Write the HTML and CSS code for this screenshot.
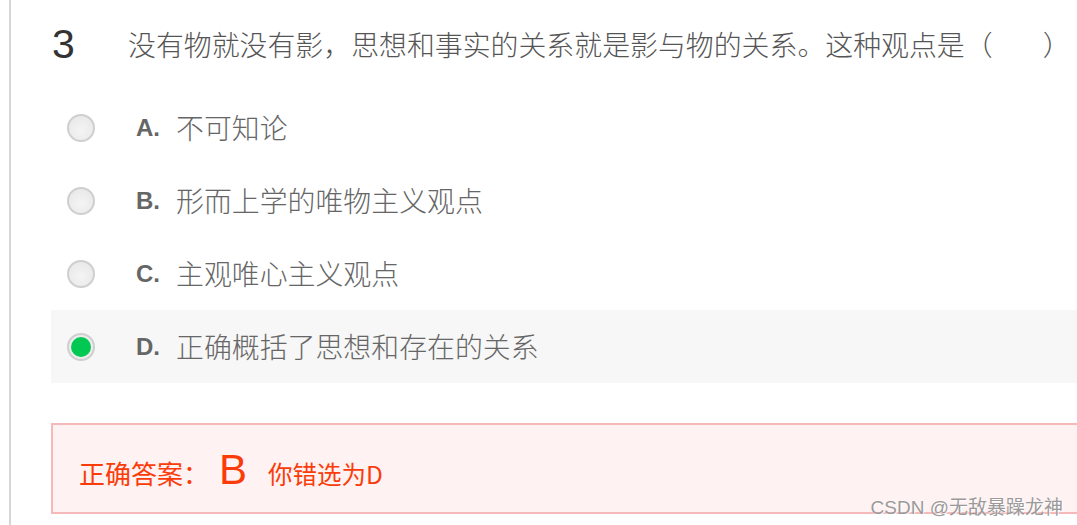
FILE: index.html
```html
<!DOCTYPE html>
<html lang="zh-CN">
<head>
<meta charset="utf-8">
<title>题目 3</title>
<link rel="stylesheet" href="styles.css">
</head>
<body>
<div class="page">
  <div class="question">
    <div class="q-head">
      <span class="q-num">3</span>
      <span class="q-text">没有物就没有影，思想和事实的关系就是影与物的关系。这种观点是（<span class="blank"></span>）</span>
    </div>
    <ul class="options">
      <li class="option"><span class="radio"></span><span class="opt-key">A.</span><span class="opt-text">不可知论</span></li>
      <li class="option"><span class="radio"></span><span class="opt-key">B.</span><span class="opt-text">形而上学的唯物主义观点</span></li>
      <li class="option"><span class="radio"></span><span class="opt-key">C.</span><span class="opt-text">主观唯心主义观点</span></li>
      <li class="option selected"><span class="radio checked"></span><span class="opt-key">D.</span><span class="opt-text">正确概括了思想和存在的关系</span></li>
    </ul>
    <div class="answer">
      <span class="ans-label">正确答案：</span>
      <span class="ans-key">B</span>
      <span class="ans-wrong">你错选为D</span>
    </div>
  </div>
  <div class="watermark">CSDN @无敌暴躁龙神</div>
</div>
</body>
</html>
```

FILE: styles.css
```css
html, body {
  margin: 0;
  padding: 0;
  background: #ffffff;
  overflow: hidden;
}

body {
  width: 1077px;
  height: 525px;
  font-family: "Liberation Sans", Arial, "Noto Sans CJK SC", sans-serif;
}

.page {
  position: relative;
  width: 1077px;
  height: 525px;
}

.question {
  margin-left: 9px;
  border-left: 2px solid #d6d6d6;
  padding-left: 40px;
  height: 525px;
  width: 1100px;
  box-sizing: border-box;
}

.q-head {
  display: flex;
  align-items: center;
  height: 89px;
  padding-bottom: 2px;
}

.q-num {
  width: 77px;
  font-family: "Liberation Sans", Arial, sans-serif;
  font-size: 41px;
  color: #333333;
  line-height: 1;
  padding-left: 1px;
  box-sizing: border-box;
}

.q-text {
  font-family: "Noto Sans CJK SC", sans-serif;
  font-weight: 300;
  font-size: 27.9px;
  color: #555555;
  line-height: 1;
  white-space: nowrap;
}

.blank {
  display: inline-block;
  width: 50px;
}

.options {
  list-style: none;
  margin: 0;
  padding: 0;
}

.option {
  display: flex;
  align-items: center;
  height: 73px;
  padding-left: 16px;
}

.option.selected {
  background: #f7f7f7;
}

.radio {
  width: 28px;
  height: 28px;
  border-radius: 50%;
  box-sizing: border-box;
  border: 2px solid #cfcfcf;
  background: radial-gradient(circle at 50% 60%, #f4f4f4 0%, #eaeaea 70%, #dedede 100%);
  flex: none;
  display: flex;
  align-items: center;
  justify-content: center;
}

.radio.checked {
  background: #ececec;
}

.radio.checked::after {
  content: "";
  width: 20px;
  height: 20px;
  border-radius: 50%;
  background: #00c853;
}

.opt-key {
  margin-left: 41px;
  font-family: "Liberation Sans", Arial, sans-serif;
  font-weight: bold;
  font-size: 24px;
  color: #666666;
  width: 40px;
}

.opt-text {
  font-family: "Noto Sans CJK SC", sans-serif;
  font-weight: 300;
  font-size: 27.9px;
  color: #666666;
  line-height: 1;
}

.answer {
  margin-top: 40px;
  height: 91px;
  box-sizing: border-box;
  border: 2px solid #f5b9b9;
  background: #fff2f2;
  display: flex;
  align-items: baseline;
  padding: 21px 0 0 26px;
  color: #fa3c0a;
  font-family: "Noto Sans CJK SC", sans-serif;
}

.ans-label {
  font-size: 26px;
}

.ans-key {
  font-family: "Liberation Sans", Arial, sans-serif;
  font-size: 42px;
  margin-left: 10px;
}

.ans-wrong {
  font-size: 24.5px;
  margin-left: 21px;
}

.watermark {
  position: absolute;
  right: 14px;
  bottom: 8px;
  font-family: "Liberation Sans", Arial, "Noto Sans CJK SC", sans-serif;
  font-size: 19px;
  color: #9a9a9a;
  text-shadow: 1px 1px 1px #ffffff;
  line-height: 1;
}
```
